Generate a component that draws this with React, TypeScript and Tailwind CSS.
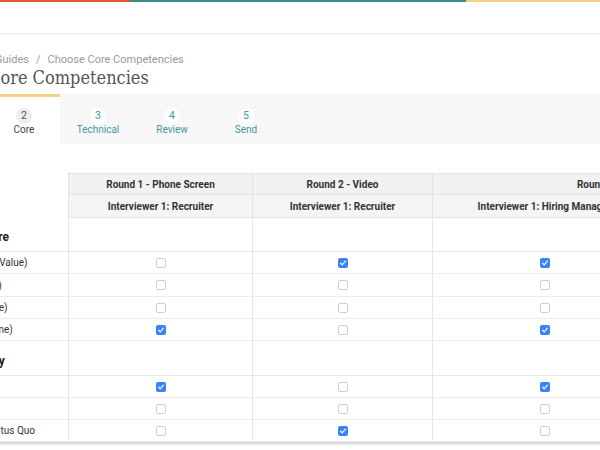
import React from "react";

const Check = ({ on }: { on: boolean }) =>
  on ? (
    <div className="w-[10px] h-[10px] rounded-[2px] bg-[#3b82f6] flex items-center justify-center">
      <svg width="8" height="8" viewBox="0 0 8 8" fill="none">
        <path d="M1.6 4.2 L3.2 5.8 L6.4 2.2" stroke="white" strokeWidth="1.2" strokeLinecap="round" strokeLinejoin="round" />
      </svg>
    </div>
  ) : (
    <div className="w-[10px] h-[10px] rounded-[2px] border border-[#cfcfcf] bg-white" />
  );

type Row =
  | { kind: "section"; label: string; h: string }
  | { kind: "item"; label: string; h: string; v: [boolean, boolean, boolean] };

const rows: Row[] = [
  { kind: "section", label: "Our Values & Culture", h: "h-[34px]" },
  { kind: "item", label: "Customer Focus (Core Value)", h: "h-[22px]", v: [false, true, true] },
  { kind: "item", label: "Ownership (Core Value)", h: "h-[23px]", v: [false, false, false] },
  { kind: "item", label: "Accountability (Baseline)", h: "h-[22px]", v: [false, false, false] },
  { kind: "item", label: "Respectfulness (Baseline)", h: "h-[22px]", v: [true, false, true] },
  { kind: "section", label: "Leader Competency", h: "h-[35px]" },
  { kind: "item", label: "Problem Solving", h: "h-[22px]", v: [true, false, true] },
  { kind: "item", label: "Decision Making", h: "h-[22px]", v: [false, false, false] },
  { kind: "item", label: "Challenging the Old Status Quo", h: "h-[22px]", v: [false, true, false] },
];

const tabs = [
  { n: "2", label: "Core", active: true },
  { n: "3", label: "Technical", active: false },
  { n: "4", label: "Review", active: false },
  { n: "5", label: "Send", active: false },
];

export default function App() {
  return (
    <div className="w-[600px] h-[450px] overflow-hidden bg-white font-['Roboto',sans-serif] text-[#333]">
      {/* top color bar */}
      <div className="flex h-[2px]">
        <div className="w-[130px] bg-[#dc5a2b]" />
        <div className="w-[336px] bg-[#3f8b88]" />
        <div className="flex-1 bg-[#f6d282]" />
      </div>
      {/* header */}
      <div className="h-[32px] border-b border-[#ececec] shadow-[0_1px_1px_rgba(0,0,0,0.03)]" />

      {/* breadcrumb */}
      <div className="mt-[19px] ml-[-5px] flex text-[11px] leading-[14px] text-[#9a9a9a] whitespace-nowrap">
        <span>Guides</span>
        <span className="mx-[7px]">/</span>
        <span>Choose Core Competencies</span>
      </div>
      {/* title */}
      <div className="ml-[-12px] h-[22px] text-[18px] leading-[22px] text-[#555] font-['DejaVu_Serif',serif] font-stretch-condensed whitespace-nowrap">
        Core Competencies
      </div>

      {/* tabs */}
      <div className="mt-[5px] h-[50px] bg-[#f7f7f7] flex">
        <div className="flex gap-[2px] ml-[-12px]">
          {tabs.map((t) => (
            <div
              key={t.n}
              className={
                t.active
                  ? "w-[72px] h-[50px] bg-white border-t-[3px] border-[#f6d282] flex flex-col items-center pt-[11px]"
                  : "w-[72px] h-[50px] border-t-[3px] border-transparent flex flex-col items-center pt-[11px]"
              }
            >
              <div
                className={
                  t.active
                    ? "w-[16px] h-[16px] rounded-full bg-[#ededed] text-[#555] text-[10.5px] leading-[16px] text-center"
                    : "w-[16px] h-[16px] rounded-full bg-white text-[#3f9aa0] text-[10.5px] leading-[16px] text-center"
                }
              >
                {t.n}
              </div>
              <div
                className={
                  t.active
                    ? "mt-[-1px] text-[10px] leading-[14px] text-[#444]"
                    : "mt-[-1px] text-[10px] leading-[14px] text-[#3f9aa0]"
                }
              >
                {t.label}
              </div>
            </div>
          ))}
        </div>
      </div>

      {/* table */}
      <div className="mt-[29px] ml-[-103px] flex flex-col">
        {/* header row 1 */}
        <div className="flex h-[22px]">
          <div className="w-[171px] shrink-0" />
          <div className="w-[184px] shrink-0 bg-[#f1f1f1] border-l border-t border-b border-[#e3e3e3] flex items-center justify-center text-[10px] font-bold">
            Round 1 - Phone Screen
          </div>
          <div className="w-[180px] shrink-0 bg-[#f1f1f1] border-l border-t border-b border-[#e3e3e3] flex items-center justify-center text-[10px] font-bold">
            Round 2 - Video
          </div>
          <div className="w-[364px] shrink-0 bg-[#f1f1f1] border-l border-t border-b border-[#e3e3e3] flex items-center justify-center text-[10px] font-bold whitespace-nowrap">
            Round 3 - Onsite
          </div>
        </div>
        {/* header row 2 */}
        <div className="flex h-[23px]">
          <div className="w-[171px] shrink-0" />
          <div className="w-[184px] shrink-0 bg-[#f4f4f4] border-l border-b border-[#e3e3e3] flex items-center justify-center text-[10px] font-bold">
            Interviewer 1: Recruiter
          </div>
          <div className="w-[180px] shrink-0 bg-[#f4f4f4] border-l border-b border-[#e3e3e3] flex items-center justify-center text-[10px] font-bold">
            Interviewer 1: Recruiter
          </div>
          <div className="w-[224px] shrink-0 bg-[#f4f4f4] border-l border-b border-[#e3e3e3] flex items-center justify-center text-[10px] font-bold whitespace-nowrap">
            Interviewer 1: Hiring Manager
          </div>
          <div className="w-[140px] shrink-0 bg-[#f4f4f4] border-l border-b border-[#e3e3e3] flex items-center justify-center text-[10px] font-bold whitespace-nowrap">
            Interviewer 2: Team Lead
          </div>
        </div>
        {rows.map((r, i) =>
          r.kind === "section" ? (
            <div key={i} className={`flex ${r.h} border-b border-[#e6e6e6]`}>
              <div className="w-[171px] shrink-0 flex items-end pb-[5px] text-[12px] font-bold text-[#222] whitespace-nowrap">
                {r.label}
              </div>
              <div className="w-[184px] shrink-0 border-l border-[#e6e6e6]" />
              <div className="w-[180px] shrink-0 border-l border-[#e6e6e6]" />
              <div className="w-[224px] shrink-0 border-l border-[#e6e6e6]" />
              <div className="w-[140px] shrink-0 border-l border-[#e6e6e6]" />
            </div>
          ) : (
            <div key={i} className={`flex ${r.h} border-b border-[#ececec]`}>
              <div className="w-[171px] shrink-0 flex items-center text-[10px] text-[#333] whitespace-nowrap">
                {r.label}
              </div>
              <div className="w-[184px] shrink-0 border-l border-[#e6e6e6] flex items-center justify-center">
                <Check on={r.v[0]} />
              </div>
              <div className="w-[180px] shrink-0 border-l border-[#e6e6e6] flex items-center justify-center">
                <Check on={r.v[1]} />
              </div>
              <div className="w-[224px] shrink-0 border-l border-[#e6e6e6] flex items-center justify-center">
                <Check on={r.v[2]} />
              </div>
              <div className="w-[140px] shrink-0 border-l border-[#e6e6e6] flex items-center justify-center">
                <Check on={false} />
              </div>
            </div>
          )
        )}
      </div>
      <div className="h-[4px] bg-gradient-to-b from-[#cdcdcd] to-white" />
    </div>
  );
}
